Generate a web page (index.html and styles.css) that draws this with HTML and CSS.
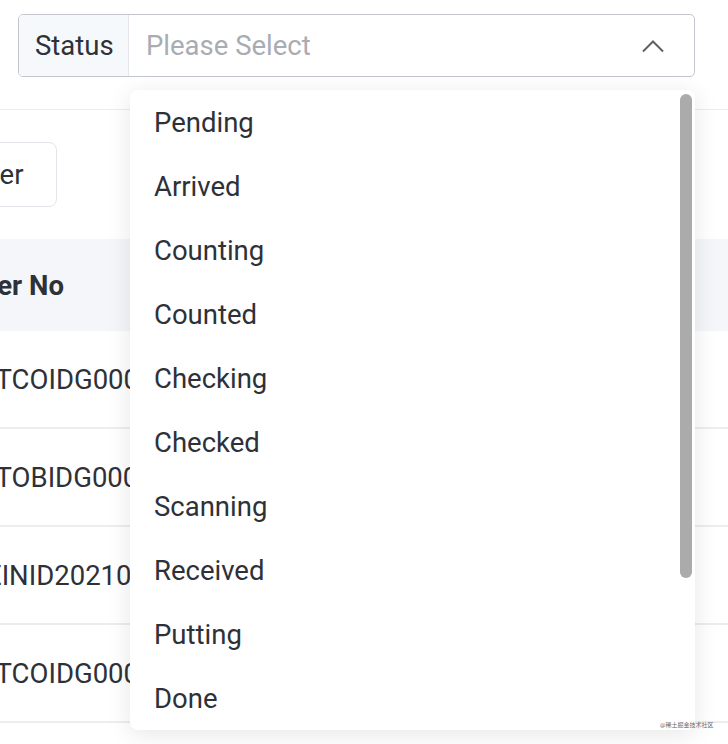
FILE: index.html
```html
<!DOCTYPE html>
<html lang="en">
<head>
<meta charset="utf-8">
<title>Status filter</title>
<link rel="stylesheet" href="styles.css">
</head>
<body>
<div class="page">
  <div class="filter-bar">
    <div class="select">
      <div class="select-label">Status</div>
      <div class="select-input">
        <span class="placeholder">Please Select</span>
        <svg class="chevron" width="24" height="14" viewBox="0 0 24 14"><path d="M2 12.5 L12 2.5 L22 12.5" fill="none" stroke="#5f6166" stroke-width="2"/></svg>
      </div>
    </div>
  </div>
  <div class="toolbar">
    <button class="btn">Filter</button>
  </div>
  <div class="table">
    <div class="row head"><div class="cell">Order No</div></div>
    <div class="row"><div class="cell">OTCOIDG0001</div></div>
    <div class="row"><div class="cell">OTOBIDG0001</div></div>
    <div class="row"><div class="cell shift">EINID202101</div></div>
    <div class="row"><div class="cell">OTCOIDG0002</div></div>
  </div>

  <ul class="dropdown">
    <li>Pending</li>
    <li>Arrived</li>
    <li>Counting</li>
    <li>Counted</li>
    <li>Checking</li>
    <li>Checked</li>
    <li>Scanning</li>
    <li>Received</li>
    <li>Putting</li>
    <li>Done</li>
  </ul>
  <div class="scrollbar"></div>
  <div class="watermark">@稀土掘金技术社区</div>
</div>
</body>
</html>
```

FILE: styles.css
```css
html, body {
  margin: 0;
  padding: 0;
  background: #ffffff;
}
body {
  font-family: Roboto, "Noto Sans", "Noto Sans CJK SC", sans-serif;
  color: #2e3138;
  overflow: hidden;
}
.page {
  position: relative;
  width: 728px;
  height: 744px;
  overflow: hidden;
}
.filter-bar {
  padding: 14px 0 0 18px;
  box-sizing: content-box;
  border-bottom: 1px solid #ebedf0;
  height: 95px;
}
.select {
  display: flex;
  width: 677px;
  height: 63px;
  box-sizing: border-box;
  border: 1.5px solid #c3c6cd;
  border-radius: 5px;
  overflow: hidden;
}
.select-label {
  display: flex;
  align-items: center;
  padding: 0 14px 0 16px;
  width: 110px;
  box-sizing: border-box;
  background: #f6f9fc;
  border-right: 1px solid #e4e7ec;
  font-size: 27.5px;
  color: #2e3138;
}
.select-input {
  flex: 1;
  display: flex;
  align-items: center;
  justify-content: space-between;
  padding: 0 29px 0 17px;
}
.placeholder {
  font-size: 27.5px;
  color: #a9acb3;
}
.chevron {
  display: block;
}
.toolbar {
  padding-top: 32px;
  height: 98px;
  box-sizing: border-box;
  margin-left: -63px;
}
.btn {
  height: 65px;
  padding: 0 33px 0 24px;
  font-family: inherit;
  font-size: 27.5px;
  color: #2e3138;
  background: #fff;
  border: 1px solid #e3e5ea;
  border-radius: 8px;
}
.table {
  margin-top: 31px;
}
.row {
  height: 98px;
  display: flex;
  align-items: center;
  border-bottom: 2px solid #ebedf0;
  box-sizing: border-box;
}
.row.head {
  height: 92px;
  background: #f4f6f9;
  border-bottom: none;
  font-weight: 700;
}
.cell {
  margin-left: -23px;
  font-size: 27.5px;
  white-space: nowrap;
  color: #2e3138;
}
.cell.shift {
  margin-left: -14px;
}
.row.head .cell {
  margin-left: -47px;
}
.dropdown {
  position: absolute;
  left: 130px;
  top: 90px;
  width: 565px;
  height: 640px;
  margin: 0;
  padding: 0;
  list-style: none;
  background: #fff;
  border-radius: 8px;
  box-shadow: 0 4px 24px rgba(0, 0, 0, 0.10);
  overflow: hidden;
}
.dropdown li {
  height: 64px;
  line-height: 66px;
  padding-left: 24px;
  font-size: 27.5px;
  color: #2e3138;
}
.scrollbar {
  position: absolute;
  left: 680px;
  top: 94px;
  width: 12px;
  height: 484px;
  border-radius: 6px;
  background: #ababab;
}
.watermark {
  position: absolute;
  left: 660px;
  top: 720px;
  font-size: 6px;
  color: #6a6a6a;
  white-space: nowrap;
}
```
